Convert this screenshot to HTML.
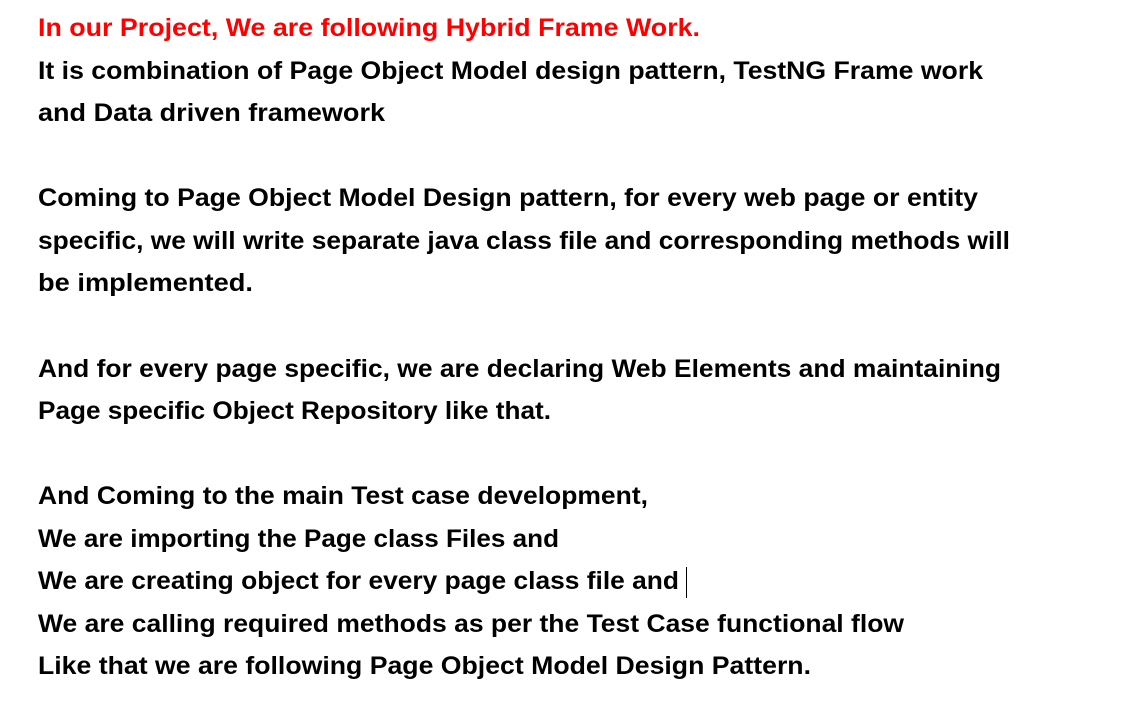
<!DOCTYPE html>
<html><head><meta charset="utf-8"><style>
html,body{margin:0;padding:0;background:#fff;width:1148px;height:703px;overflow:hidden}
.l{position:absolute;left:38px;height:42px;line-height:42px;font-family:"Liberation Sans",Arial,sans-serif;font-weight:bold;font-size:25px;color:#000;white-space:nowrap;transform-origin:0 50%}
.r{color:#ff0000}
#cur{position:absolute;left:686px;top:567px;width:1px;height:31px;background:#000}
</style></head><body>
<div class="l r" style="top:7px">In our Project, We are following Hybrid Frame Work.</div>
<div class="l" style="top:50px">It is combination of Page Object Model design pattern, TestNG Frame work</div>
<div class="l" style="top:92px">and Data driven framework</div>
<div class="l" style="top:177px">Coming to Page Object Model Design pattern, for every web page or entity</div>
<div class="l" style="top:220px">specific, we will write separate java class file and corresponding methods will</div>
<div class="l" style="top:262px">be implemented.</div>
<div class="l" style="top:348px">And for every page specific, we are declaring Web Elements and maintaining</div>
<div class="l" style="top:390px">Page specific Object Repository like that.</div>
<div class="l" style="top:475px">And Coming to the main Test case development,</div>
<div class="l" style="top:518px">We are importing the Page class Files and</div>
<div class="l" style="top:560px">We are creating object for every page class file and</div>
<div class="l" style="top:603px">We are calling required methods as per the Test Case functional flow</div>
<div class="l" style="top:645px">Like that we are following Page Object Model Design Pattern.</div>
<div id="cur"></div>
<script>
var w=[700,983,385,978,1010,253,1001,551,648,559,679,904,811];
var ls=document.querySelectorAll('.l');
for(var i=0;i<ls.length;i++){var cw=ls[i].getBoundingClientRect().width;ls[i].style.transform='scaleX('+((w[i]-38)/cw)+')';}
</script>
</body></html>
